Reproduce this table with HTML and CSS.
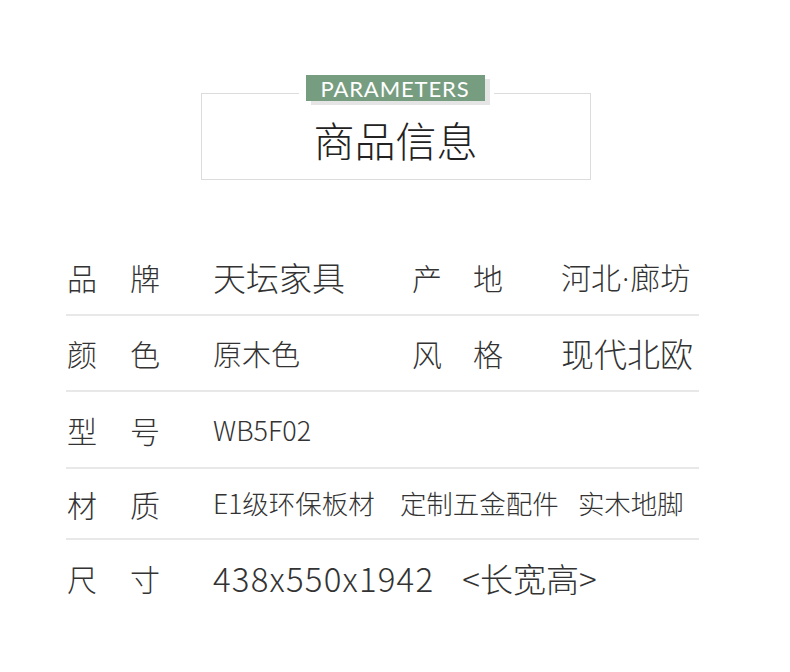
FILE: index.html
```html
<!DOCTYPE html>
<html lang="zh-CN">
<head>
<meta charset="utf-8">
<title>商品信息</title>
<link rel="stylesheet" href="styles.css">
</head>
<body>
<div class="page">
  <header class="head">
    <div class="head-box">
      <div class="badge-wrap"><div class="badge">PARAMETERS</div></div>
      <h1 class="title">商品信息</h1>
    </div>
  </header>

  <section class="table">
    <div class="row">
      <div class="label"><span>品</span><span>牌</span></div>
      <div class="value v-lg">天坛家具</div>
      <div class="label label-r"><span>产</span><span>地</span></div>
      <div class="value v-md">河北<span class="dot">·</span>廊坊</div>
    </div>
    <div class="row">
      <div class="label"><span>颜</span><span>色</span></div>
      <div class="value v-sm2">原木色</div>
      <div class="label label-r"><span>风</span><span>格</span></div>
      <div class="value v-lg">现代北欧</div>
    </div>
    <div class="row row-tall">
      <div class="label"><span>型</span><span>号</span></div>
      <div class="value v-code wide">WB5F02</div>
    </div>
    <div class="row row-short">
      <div class="label"><span>材</span><span>质</span></div>
      <div class="value v-sm wide">
        <span class="part gap1">E1级环保板材</span><span class="part gap2">定制五金配件</span><span class="part">实木地脚</span>
      </div>
    </div>
    <div class="row row-last">
      <div class="label"><span>尺</span><span>寸</span></div>
      <div class="value v-lg wide"><span class="part gap3 nums">438x550x1942</span><span class="part">&lt;长宽高&gt;</span></div>
    </div>
  </section>
</div>
</body>
</html>
```

FILE: styles.css
```css
* { box-sizing: border-box; }
html, body {
  margin: 0;
  padding: 0;
  background: #ffffff;
}
body {
  font-family: "Noto Sans CJK SC Light", "Noto Sans CJK SC", "Noto Sans", sans-serif;
  color: #333333;
}
.page {
  width: 790px;
  height: 672px;
  padding-top: 93px;
}
.head {
  display: flex;
  justify-content: center;
}
.head-box {
  position: relative;
  width: 390px;
  height: 87px;
  margin-left: 1px;
  border: 1px solid #dcdcdc;
  display: flex;
  justify-content: center;
  align-items: center;
}
.badge-wrap {
  position: absolute;
  top: -19px;
  left: 97px;
  padding: 0 9px 0 7px;
  background: #ffffff;
}
.badge {
  width: 179px;
  height: 26px;
  background: #779d81;
  color: #ffffff;
  font-family: "Lato", "Noto Sans", sans-serif;
  font-weight: 400;
  font-size: 22px;
  line-height: 27px;
  letter-spacing: 0.9px;
  text-align: center;
  box-shadow: 5px 4px 0 #e5e5e5;
}
.title {
  margin: 6px 0 0 0;
  font-size: 41px;
  font-weight: 300;
  color: #222222;
  line-height: 1;
  letter-spacing: 0;
}
.table {
  margin: 60px 0 0 66px;
  width: 633px;
}
.row {
  display: grid;
  grid-template-columns: 147px 198px 150px 1fr;
  align-items: center;
  height: 76px;
  border-bottom: 2px solid #e8e8e8;
  font-weight: 300;
}
.row-tall { height: 77px; }
.row-short { height: 71px; }
.row-last { border-bottom: none; }
.label {
  display: flex;
  gap: 33px;
  font-size: 30px;
  line-height: 1;
  padding-left: 1px;
}
.label-r { gap: 31px; }
.value {
  line-height: 1;
  white-space: nowrap;
}
.wide { grid-column: 2 / 5; }
.v-lg { font-size: 33px; }
.v-md { font-size: 30px; }
.v-sm2 { font-size: 29px; }
.v-code { font-size: 27px; }
.v-sm { font-size: 26.5px; }
.dot {
  font-family: "Noto Sans", sans-serif;
  margin: 0 1px;
}
.part { display: inline-block; }
.nums { letter-spacing: 1.2px; }
.gap1 { margin-right: 25px; }
.gap2 { margin-right: 19px; }
.gap3 { margin-right: 28px; }
```
